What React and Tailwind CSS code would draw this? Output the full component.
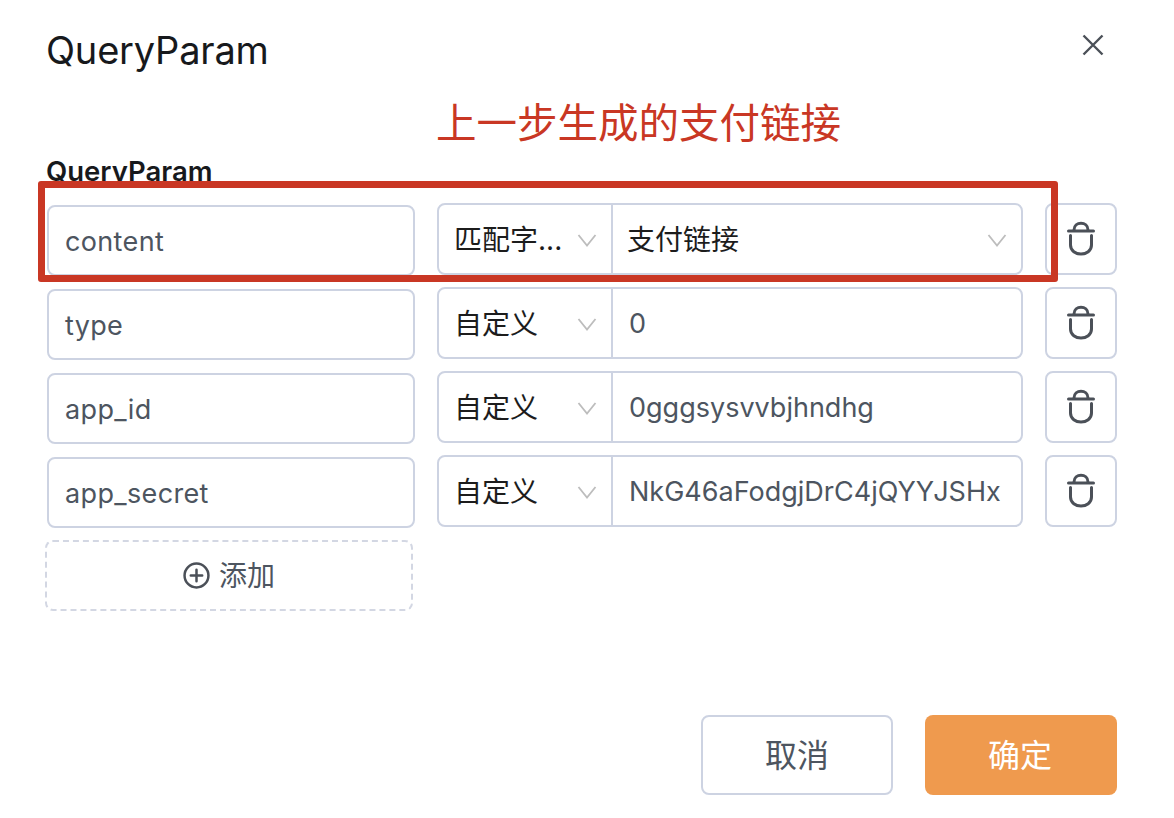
const FONT = "font-['Inter','Noto_Sans_CJK_SC',sans-serif]";

function Chevron() {
  return (
    <svg width="20" height="14" viewBox="0 0 20 14" fill="none" stroke="#bdbdbd" strokeWidth="1.8" className="shrink-0">
      <path d="M1.5 2 L10 12.5 L18.5 2" />
    </svg>
  );
}

function Trash() {
  return (
    <svg width="28" height="36" viewBox="0 0 28 36" fill="none" stroke="#4b5058" strokeWidth="3" strokeLinecap="round" className="-mt-[2px]">
      <path d="M1.5 11 H26.5" />
      <path d="M7 10 C7 1 21 1 21 10" />
      <path d="M3.5 15.5 V25 C3.5 37 24.5 37 24.5 25 V15.5" />
    </svg>
  );
}

function Row({ name, mode, value, selectValue, rowTop }) {
  return (
    <div className={`flex items-start h-[72px] ${rowTop}`}>
      <div className="mt-[2px] ml-[1px] w-[368px] h-[71px] rounded-[8px] border-2 border-[#cdd3e2] flex items-center pl-[16px] pt-[3px] text-[27px] tracking-[0.35px] text-[#4d5560] bg-white">
        {name}
      </div>
      <div className="ml-[22px] w-[586px] h-[72px] rounded-[8px] border-2 border-[#cdd3e2] flex bg-white">
        <div className="w-[174px] shrink-0 border-r-2 border-[#cdd3e2] flex items-center justify-between pl-[15px] pr-[14px] pt-[1px] text-[28px] text-[#1c1c1c]">
          <span className="whitespace-nowrap">{mode}</span>
          <Chevron />
        </div>
        {selectValue ? (
          <div className="flex-1 flex items-center justify-between pl-[14px] pr-[14px] pt-[1px] text-[28px] text-[#1c1c1c]">
            <span>{selectValue}</span>
            <Chevron />
          </div>
        ) : (
          <div className="flex-1 flex items-center pl-[16px] pt-[2px] text-[27px] text-[#4d5560] whitespace-nowrap overflow-hidden">
            {value}
          </div>
        )}
      </div>
      <div className="ml-[22px] w-[72px] h-[72px] rounded-[8px] border-2 border-[#cdd3e2] flex items-center justify-center bg-white">
        <Trash />
      </div>
    </div>
  );
}

export default function App() {
  return (
    <div className={`relative w-[1174px] h-[818px] bg-white overflow-hidden pl-[46px] pr-[57px] ${FONT}`}>
      <div className="flex items-start justify-between h-[88px]">
        <h1 className="mt-[25px] text-[38px] leading-[50px] font-normal text-[#17191c] tracking-[-0.2px]">QueryParam</h1>
        <svg width="24" height="24" viewBox="0 0 24 24" fill="none" stroke="#4b5058" strokeWidth="2.4" className="mt-[33px] mr-[12px]">
          <path d="M2.5 2.5 L21.5 21.5 M21.5 2.5 L2.5 21.5" />
        </svg>
      </div>
      <div className="pl-[390px] h-[66px] pt-[2px] text-[40.5px] leading-[66px] text-[#c93724] mt-[1px] whitespace-nowrap">上一步生成的支付链接</div>
      <div className="h-[48px] -mt-[2px] mb-[2px] text-[27.5px] leading-[36px] font-semibold text-[#17191c]">QueryParam</div>
      <Row name="content" mode="匹配字..." selectValue="支付链接" />
      <Row name="type" mode="自定义" value="0" rowTop="mt-[12px]" />
      <Row name="app_id" mode="自定义" value="0gggsysvvbjhndhg" rowTop="mt-[12px]" />
      <Row name="app_secret" mode="自定义" value="NkG46aFodgjDrC4jQYYJSHx" rowTop="mt-[12px]" />
      <div className="mt-[13px] -ml-[1px] w-[368px] h-[71px] rounded-[8px] border-2 border-dashed border-[#d3d7e3] flex items-center justify-center gap-[9px] text-[28px] text-[#4d5560]">
        <svg width="27" height="27" viewBox="0 0 26 26" fill="none" stroke="#4b5058" strokeWidth="2.4" strokeLinecap="round">
          <circle cx="13" cy="13" r="11.5" />
          <path d="M13 7.5 V18.5 M7.5 13 H18.5" />
        </svg>
        <span>添加</span>
      </div>
      <div className="mt-[104px] flex justify-end gap-[32px]">
        <button className="w-[192px] h-[80px] rounded-[8px] border-2 border-[#cdd3e2] bg-white pt-[2px] text-[32px] text-[#4d5560]">取消</button>
        <button className="w-[192px] h-[80px] rounded-[8px] bg-[#ef9a4e] pt-[2px] pr-[2px] text-[32px] text-white">确定</button>
      </div>
      <div className="absolute left-[38px] top-[181px] w-[1020px] h-[101px] border-[7px] border-[#c93724] rounded-[3px]" />
    </div>
  );
}
